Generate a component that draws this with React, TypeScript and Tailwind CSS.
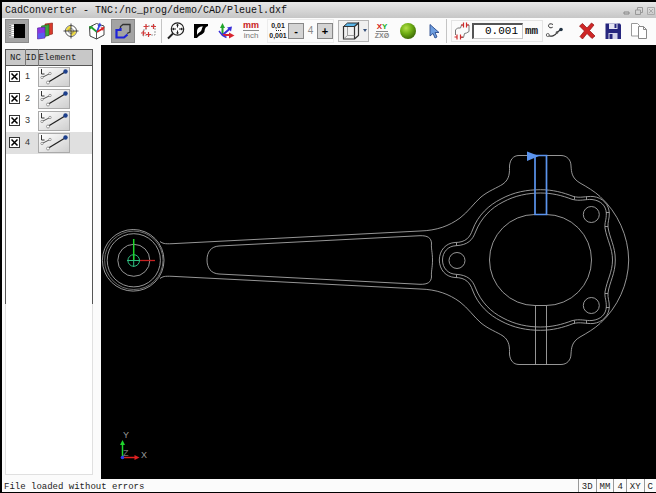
import React, { useState } from 'react';
import { clsx } from 'clsx';

interface ToolButtonProps {
  label: string;
  active?: boolean;
  onClick?: () => void;
  children: React.ReactNode;
}

const ToolButton: React.FC<ToolButtonProps> = ({ label, active, onClick, children }) => (
  <button
    type="button"
    aria-label={label}
    onClick={onClick}
    className={clsx(
      'flex h-6 w-6 shrink-0 items-center justify-center',
      active && 'border border-[#8a8a8a] bg-[#a3a3a3]',
    )}
  >
    {children}
  </button>
);

const Icon: React.FC<{ children: React.ReactNode }> = ({ children }) => (
  <svg viewBox="0 0 20 20" className="h-5 w-5 shrink-0" fill="none" aria-hidden="true">
    {children}
  </svg>
);

const Divider = () => <div className="h-6 w-px shrink-0 bg-[#c4c4c4]" />;

const SidebarIcon = () => (
  <Icon>
    <path d="M2 3h16v14H2z" fill="#000" />
    <path d="M2 3h5v14H2z" fill="#bbb" />
    <path d="M4.500 4.500h2.500M4.500 6.500h2.500M4.500 8.500h2.500M4.500 10.500h2.500M4.500 12.500h2.500M4.500 14.500h2.500" stroke="#fff" />
    <path d="M3 4v12" stroke="#555" strokeDasharray="1 1" />
  </Icon>
);

const LayersIcon = () => (
  <Icon>
    <path d="M10 3l7.500-1v11l-7.500 2z" fill="#d93a2b" stroke="#8c1a10" strokeWidth=".6" />
    <path d="M6.500 5l7.500-1.500v11L6.500 16z" fill="#3da53a" stroke="#1c6a1c" strokeWidth=".6" />
    <path d="M2.500 7L10 6v11l-7.500 1z" fill="#8a35e0" stroke="#4c1a96" strokeWidth=".6" />
    <path d="M3 12.500l6.500-1v5.300L3 17.500z" fill="#5a5df0" />
  </Icon>
);

const DatumIcon = () => (
  <Icon>
    <circle cx="10" cy="10" r="5.500" fill="#fff" stroke="#555" />
    <path d="M10 10h5a5 5 0 0 1-5 5zM10 10H5a5 5 0 0 1 5-5z" fill="#f1dc3c" />
    <circle cx="10" cy="10" r="2.500" stroke="#777" strokeWidth=".8" />
    <path d="M10 2.500v15M2.500 10h15" stroke="#444" />
  </Icon>
);

const PlaneIcon = () => (
  <Icon>
    <path d="M2.500 6l7-3.500L17 5v9l-7.500 4L3 15z" stroke="#444" fill="#fff" />
    <path d="M9.500 18v-7" stroke="#555" />
    <path d="M10 11L4 6" stroke="#1fa02c" strokeWidth="1.800" />
    <path d="M2 5l4 .5-2.800 3z" fill="#1fa02c" />
    <path d="M10 11l2.500-7" stroke="#3344dd" strokeWidth="1.800" />
    <path d="M13 1.500l1.500 4-4-.8z" fill="#3344dd" />
    <path d="M10 11l5-3" stroke="#d22" strokeWidth="1.800" />
    <path d="M17.500 6l-1.500 4-2.500-3.500z" fill="#d22" />
  </Icon>
);

const ContourIcon = () => (
  <Icon>
    <path d="M7.500 8V5.500L10 3.500h7V11l-3 1.500" stroke="#333" strokeWidth="1.300" />
    <path d="M7.500 7v2H3.500v7.500h7.500l3.500-3" stroke="#1d22d8" strokeWidth="2.200" />
  </Icon>
);

const PointsIcon = () => (
  <Icon>
    <path d="M4 15V9h3V5h9v9h-3.500H7z" stroke="#999" strokeDasharray="2 1" />
    <path d="M7 3v5M4.500 5.500h5M4.500 9.500v5M2 12h5M14.500 3v5M12 5.500h5M9.500 11v5M7 13.500h5" stroke="#d33a3a" strokeWidth="1.200" />
  </Icon>
);

const ZoomFitIcon = () => (
  <Icon>
    <circle cx="11.500" cy="8" r="6.200" stroke="#222" strokeWidth="1.200" />
    <path d="M7 12.500L2 17.500" stroke="#222" strokeWidth="2" />
    <path d="M11.500 3v3.500M11.500 9.500V13M6.500 8H10M13 8h3.500" stroke="#222" />
    <path d="M11.500 2.500l1.500 2h-3zM11.500 13.500l1.500-2h-3zM6 8l2-1.500v3zM17 8l-2-1.500v3z" fill="#222" />
  </Icon>
);

const InvertIcon = () => (
  <Icon>
    <path d="M3 3h14v2c-3 1-3 3-3.500 5.500C13 13 9 13.500 6 17H3z" fill="#000" />
    <path d="M6 11c0-4 2-5.500 6-5.500-1.500 1.500-1 4-2.500 5S7 12 6 14z" fill="#fff" />
  </Icon>
);

const AxesIcon = () => (
  <Icon>
    <path d="M6.500 14V6" stroke="#22a52c" strokeWidth="2" />
    <path d="M6.500 2L9 7H4z" fill="#22a52c" />
    <path d="M6.500 14l7-6" stroke="#3a2fd8" strokeWidth="2" />
    <path d="M16 5.500l-1 5-4-4z" fill="#3a2fd8" />
    <path d="M6.500 14H14" stroke="#d82430" strokeWidth="2" />
    <path d="M18.500 14.500L13 17.500v-6z" fill="#d82430" />
    <path d="M3 10l3.500 4.500 4 2" stroke="#3a2fd8" strokeWidth="1.500" />
  </Icon>
);

const CubeIcon = () => (
  <Icon>
    <path d="M2.500 5.500l4-3.500h11l-4 3.500z" fill="#56b4e8" stroke="#333" />
    <path d="M2.500 5.500h11V18h-11zM13.500 5.500l4-3.500v12.500l-4 3.500" stroke="#333" strokeWidth="1.200" />
    <path d="M6.500 6v8.500h7M6.500 14.500L2.500 18" stroke="#888" strokeWidth=".8" />
  </Icon>
);

const SphereIcon = () => (
  <Icon>
    <defs>
      <radialGradient id="sphere" cx=".38" cy=".32" r=".7">
        <stop offset="0" stopColor="#b4e04a" />
        <stop offset=".5" stopColor="#6fae14" />
        <stop offset="1" stopColor="#3d6a06" />
      </radialGradient>
    </defs>
    <circle cx="10" cy="10" r="8" fill="url(#sphere)" />
  </Icon>
);

const PointerIcon = () => (
  <Icon>
    <path d="M6 3.500v11.500l3-2.600 2 4.600 2-1-2-4.500h4z" fill="#6f9fe0" stroke="#2c4c8c" strokeWidth=".9" />
  </Icon>
);

const ToleranceIcon = () => (
  <Icon>
    <path d="M3.500 14V9L5.500 7H8.500L9.500 4H11" stroke="#777" />
    <path d="M15 4h2v6.500l-2.500 1.500-2 .5-1 4H9" stroke="#777" />
    <path d="M11.500 1.500v5M14.500 1.500v5M5 13.500v5M8.500 13.500v5" stroke="#d12b2b" strokeWidth="1.200" />
    <path d="M9 4h2.500M14.500 4H17M2.500 16H5M8.500 16H11" stroke="#d12b2b" />
  </Icon>
);

const TransitionIcon = () => (
  <Icon>
    <path d="M8 3.500C5.500 2 3.500 3 3.500 4.700s2 3 4.200 1.500" stroke="#333" />
    <path d="M3 14.500c3 1.500 7 .5 9.500-3.500l3.500-2.500" stroke="#333" strokeWidth="1.200" />
    <circle cx="2.800" cy="14" r="1.500" fill="#fff" stroke="#444" strokeWidth=".8" />
    <circle cx="16" cy="8.500" r="1.800" fill="#234" />
    <circle cx="12" cy="11.500" r="1.300" fill="#555" />
  </Icon>
);

const DeleteIcon = () => (
  <Icon>
    <path d="M2.500 5l3-2.500L10 7l4.500-5L17 4l-4.500 5.500L18 15l-3 2.500-5-5L5.500 18 3 15.500l4.500-5.500z" fill="#cf2626" stroke="#8f1010" strokeWidth=".7" />
  </Icon>
);

const SaveIcon = () => (
  <Icon>
    <path d="M2.500 2.500H17L18 4v14H2.500z" fill="#26267e" />
    <path d="M6 2.500h8.500V8H6z" fill="#e6e6f4" />
    <path d="M11.500 3h2v4h-2z" fill="#26267e" />
    <path d="M5.500 12h9v6h-9z" fill="#d4d4ea" />
    <path d="M6.500 13h3v5h-3z" fill="#26267e" />
  </Icon>
);

const CopyIcon = () => (
  <Icon>
    <path d="M2.500 2.500h6l2 2V15h-8z" fill="#fff" stroke="#999" />
    <path d="M9.500 5.500h5l3 3v9h-8z" fill="#fff" stroke="#888" />
    <path d="M14.500 5.500v3h3" stroke="#888" />
  </Icon>
);

const Toolbar: React.FC<{ sidebar: boolean; onSidebar: () => void }> = ({ sidebar, onSidebar }) => {
  const [decimals, setDecimals] = useState(4);
  const [tolerance, setTolerance] = useState('0.001');

  return (
    <div className="flex h-[27px] shrink-0 items-center bg-[#fbfbfb] pb-0.5 pl-[3px]">
      <ToolButton label="Show list view" active={sidebar} onClick={onSidebar}><SidebarIcon /></ToolButton>
      <div className="ml-1 flex gap-0.5">
        <ToolButton label="Layers"><LayersIcon /></ToolButton>
        <ToolButton label="Preset"><DatumIcon /></ToolButton>
        <ToolButton label="Plane"><PlaneIcon /></ToolButton>
        <ToolButton label="Select contour" active><ContourIcon /></ToolButton>
        <ToolButton label="Select positions"><PointsIcon /></ToolButton>
      </div>
      <Divider />
      <div className="ml-0.5 flex gap-px">
        <ToolButton label="Zoom to fit"><ZoomFitIcon /></ToolButton>
        <ToolButton label="Background colour"><InvertIcon /></ToolButton>
        <ToolButton label="3D mode"><AxesIcon /></ToolButton>
        <button type="button" className="flex w-6 flex-col items-center justify-center font-bold">
          <span className="border-b border-[#888] text-[9px] leading-[9px] text-[#c92020]">mm</span>
          <span className="text-[8px] leading-[9px] font-normal text-[#777]">inch</span>
        </button>
      </div>
      <div className="ml-1 flex h-6 items-center border border-[#ececec]">
        <div className="flex w-5 flex-col items-center gap-px text-[7px] leading-[7px] font-bold text-[#222]">
          <span>0,01</span>
          <span className="w-[5px] border-t border-dotted border-[#222]" />
          <span>0,001</span>
        </div>
        <button
          type="button"
          aria-label="Fewer decimals"
          onClick={() => setDecimals((d) => Math.max(0, d - 1))}
          className="h-4 w-4 border border-[#888] bg-[#d4d4d4] text-[11px] leading-[12px] font-bold"
        >
          -
        </button>
        <span className="w-[13px] text-center text-[10px] text-[#888]">{decimals}</span>
        <button
          type="button"
          aria-label="More decimals"
          onClick={() => setDecimals((d) => Math.min(6, d + 1))}
          className="h-4 w-4 border border-[#888] bg-[#d4d4d4] text-[11px] leading-[12px] font-bold"
        >
          +
        </button>
      </div>
      <button
        type="button"
        aria-label="View direction"
        className="ml-1 flex h-[22px] w-[31px] items-center justify-center gap-0.5 border border-[#b4b4b4] bg-[#f0f0f0]"
      >
        <CubeIcon />
        <svg viewBox="0 0 4 3" className="h-[3px] w-1" aria-hidden="true"><path d="M0 0h4L2 3z" fill="#35507a" /></svg>
      </button>
      <div className="ml-px flex gap-0.5">
        <button type="button" className="flex w-6 flex-col items-center justify-center font-bold">
          <span className="border-b border-[#888] px-px text-[8px] leading-[9px]">
            <span className="text-[#d62020]">X</span>
            <span className="text-[#25b02b]">Y</span>
          </span>
          <span className="text-[7px] leading-[8px] text-[#888]">ZXØ</span>
        </button>
        <ToolButton label="Solid view"><SphereIcon /></ToolButton>
        <ToolButton label="Pointer"><PointerIcon /></ToolButton>
      </div>
      <Divider />
      <label className="ml-1 flex h-[22px] items-center border border-[#e4e4e4] pr-1">
        <ToleranceIcon />
        <input
          type="text"
          aria-label="Tolerance in mm"
          value={tolerance}
          onChange={(e) => setTolerance(e.target.value)}
          className="h-4 w-[51px] border border-t-2 border-l-2 border-[#c8c8c8] border-t-[#555] border-l-[#555] bg-white pr-1 text-right font-['Liberation_Mono',monospace] text-[11px] outline-none"
        />
        <span className="ml-0.5 font-['Liberation_Mono',monospace] text-[11px] leading-4 font-bold text-[#222]">mm</span>
      </label>
      <ToolButton label="Transition"><TransitionIcon /></ToolButton>
      <div className="ml-2 flex gap-0.5">
        <ToolButton label="Cancel"><DeleteIcon /></ToolButton>
        <ToolButton label="Save"><SaveIcon /></ToolButton>
        <ToolButton label="Copy"><CopyIcon /></ToolButton>
      </div>
    </div>
  );
};

const ElementList = () => {
  const [checked, setChecked] = useState<Record<number, boolean>>({ 1: true, 2: true, 3: true, 4: true });
  const [selected, setSelected] = useState(4);

  return (
    <aside className="flex w-[99px] shrink-0 flex-col bg-[#fbfbfb] pt-1 pr-2 pb-1 pl-[3px]">
      <div className="flex-[3] border-x border-[#555] bg-white">
        <table className="w-full table-fixed border-collapse">
          <thead>
            <tr className="h-4 border-y border-[#555] bg-[#c8c8c8] text-left font-['Liberation_Mono',monospace] text-[9px] leading-[14px] text-[#222]">
              <th className="w-[19px] border-r border-[#777] pl-1 font-normal">NC</th>
              <th className="w-[13px] border-r border-[#777] font-normal">ID</th>
              <th className="font-normal">Element</th>
            </tr>
          </thead>
          <tbody>
            {[1, 2, 3, 4].map((id) => (
              <tr key={id} onClick={() => setSelected(id)} className={clsx('h-[22px]', selected === id && 'bg-[#e0e0e0]')}>
                <td className="pl-[3px]">
                  <label className="grid w-[11px]">
                    <input
                      type="checkbox"
                      aria-label={`Element ${id}`}
                      checked={checked[id]}
                      onChange={() => setChecked({ ...checked, [id]: !checked[id] })}
                      className="col-start-1 row-start-1 h-[11px] w-[11px] appearance-none border border-[#333] bg-white"
                    />
                    {checked[id] && (
                      <svg viewBox="0 0 11 11" className="pointer-events-none col-start-1 row-start-1 h-[11px] w-[11px]" aria-hidden="true">
                        <path d="M2.500 2.500l6 6M8.500 2.500l-6 6" stroke="#000" strokeWidth="1.500" />
                      </svg>
                    )}
                  </label>
                </td>
                <td className="text-[9px] text-[#333]">{id}</td>
                <td>
                  <button type="button" aria-label={`Line ${id}`} className="block h-5 w-8 border border-[#aaa] bg-linear-to-br from-white to-[#cfcfcf]">
                    <svg viewBox="0 0 30 18" fill="none" className="h-full w-full" aria-hidden="true">
                      <path d="M2.500 1v5h3" stroke="#333" />
                      <path d="M3 9.500l8-4" stroke="#555" />
                      <circle cx="3" cy="9.500" r="1.200" fill="#fff" stroke="#777" strokeWidth=".7" />
                      <circle cx="11" cy="5.500" r="1.200" fill="#fff" stroke="#777" strokeWidth=".7" />
                      <path d="M9.500 14L26 4" stroke="#222" strokeWidth="1.300" />
                      <circle cx="9" cy="14.500" r="1.500" fill="#fff" stroke="#777" strokeWidth=".7" />
                      <circle cx="26.500" cy="3.500" r="2.200" fill="#1c3f8c" />
                    </svg>
                  </button>
                </td>
              </tr>
            ))}
          </tbody>
        </table>
      </div>
      <div className="flex-[2] border border-t-0 border-[#e0e0e0] bg-white" />
    </aside>
  );
};

// one half of the rod; the other half is mirrored on the centre line y = 260
const HalfRod = () => (
  <>
    <path d="M160 241.500C163 243.500 164 244 172 243.700L420 231C437 230.500 449 226 460 218C468 212 474 203 481 197C489 190.500 497 188 503 184C510 179 509.500 172 509.500 166C510 160 513 155.500 519 155.500H561C567 155.500 571 160 571 166C571.500 172 571.500 178 580 183C587 187 594 191 600 196.500A88 88 0 0 1 628.700 260" />
    <path d="M207 260C207 252 211 246.500 219 246L420 235.700C428 235.500 431 238 431.500 243C431 249 432.500 252 432.500 260" />
    <path d="M439.300 260C439.500 250 446 243 455 242.500C466 242.500 470 237 472.500 230C478 215 489 205 501 199C514 192 527 189.700 540.500 189.700C553 189.700 563 192.500 573 196.300C580 198.500 586 196 593 196.500C603 197.500 609 205 609.300 213C609.500 219 607.500 222 608 227C609.500 238 615.300 246 615.300 260" />
    <path d="M442.500 260C442.500 252 448 246 456 245.700C468 245 472.500 240 475.500 232C481 218 491 208 503 202C515 195.500 528 193 540.500 193C552 193 562 195.500 572 199.300C580 201.500 586 199 592 199.500C601 200.500 606 206 606.300 213C606.500 220 604.500 222 605 228C607 240 612.500 248 612.500 260" />
    <path d="M456.500 242.500v3M574.500 196.500v3M586.500 196.700v3M606 212.500h3.300M605 226.500h3" />
    <path d="M489.500 260A45.500 45.500 0 0 1 535 214.500H546A45.500 45.500 0 0 1 591.500 260" />
    <circle cx="591.300" cy="214.500" r="8" />
  </>
);

const Drawing = () => (
  <main className="min-w-0 flex-1 bg-black">
    <svg viewBox="101 45 555 434" className="block h-full w-full" fill="none" role="img" aria-label="Connecting rod">
      <g stroke="#a6a6a6" strokeWidth=".9">
        <HalfRod />
        <g transform="translate(0 520) scale(1 -1)"><HalfRod /></g>
        <circle cx="457" cy="260.500" r="8" />
        <circle cx="133.200" cy="260.300" r="30.800" />
        <circle cx="133.800" cy="260.300" r="29.200" stroke="#777" />
        <circle cx="133.800" cy="260.300" r="26.600" />
        <circle cx="133.800" cy="260.300" r="16" />
        <path d="M535.500 306v58.500M546.500 306v58.500" />
      </g>
      <path d="M535 155.500h11.500V214.500H535z" stroke="#5b94ee" strokeWidth="1.700" />
      <path d="M527 151.500l12 4.500-12 5z" fill="#5b94ee" />
      <circle cx="133.700" cy="260.500" r="5.800" stroke="#2fbf7f" />
      <path d="M127 260.500h13M133.700 254v13" stroke="#2fbf7f" />
      <path d="M133.700 260V239" stroke="#1fd62c" strokeWidth="1.500" />
      <path d="M140 260.500h15" stroke="#c42020" strokeWidth="1.300" />
      <path d="M122.500 457V443" stroke="#1fd62c" strokeWidth="1.500" />
      <path d="M122.500 440l2.500 5h-5z" fill="#1fd62c" />
      <path d="M123 457.500h13" stroke="#e02020" strokeWidth="1.500" />
      <path d="M139.500 457.500l-5 2.500v-5z" fill="#e02020" />
      <circle cx="122.500" cy="457.500" r="1.800" fill="#2a40e8" />
      <g className="font-['Liberation_Sans',sans-serif] text-[9px]" fill="#9a9a9a">
        <text x="123" y="438">Y</text>
        <text x="141" y="458">X</text>
        <text x="123" y="456" fill="#777">Z</text>
      </g>
    </svg>
  </main>
);

const STATUS = ['3D', 'MM', '4', 'XY', 'C'];

export default function App() {
  const [sidebar, setSidebar] = useState(true);

  return (
    <div className="flex h-screen flex-col overflow-hidden border-t-2 border-b border-l-2 border-black bg-[#fbfbfb] font-['Liberation_Sans',sans-serif]">
      <header className="flex h-4 shrink-0 items-center justify-between bg-linear-to-b from-[#e8e8e8] to-[#c6c6c6] pt-0.5 pr-px pl-[3px]">
        <h1 className="font-['Liberation_Mono',monospace] text-[10px] leading-4 text-[#111]">
          CadConverter - TNC:/nc_prog/demo/CAD/Pleuel.dxf
        </h1>
        <div className="flex gap-1">
          <button type="button" aria-label="Minimize">
            <svg viewBox="0 0 8 8" className="h-2 w-2" fill="none"><path d="M1 5h5v2H1z" stroke="#888" /></svg>
          </button>
          <button type="button" aria-label="Restore">
            <svg viewBox="0 0 8 8" className="h-2 w-2" fill="none"><path d="M.5 3h5v4.500h-5zM2.500 3V.5h5v5h-2" stroke="#999" /></svg>
          </button>
          <button type="button" aria-label="Close">
            <svg viewBox="0 0 8 8" className="h-2 w-2" fill="none"><path d="M.5 .5h7v7h-7zM2 2l4 4M6 2L2 6" stroke="#aaa" /></svg>
          </button>
        </div>
      </header>

      <Toolbar sidebar={sidebar} onSidebar={() => setSidebar(!sidebar)} />

      <div className="flex min-h-0 flex-1">
        {sidebar && <ElementList />}
        <Drawing />
      </div>

      <footer className="flex h-[13px] shrink-0 items-stretch justify-between pl-0.5 font-['Liberation_Mono',monospace] text-[9px] leading-4 text-[#222]">
        <p>File loaded without errors</p>
        <ul className="flex">
          {STATUS.map((item) => (
            <li key={item} className="border-l border-[#999] px-[3px]">{item}</li>
          ))}
        </ul>
      </footer>
    </div>
  );
}
